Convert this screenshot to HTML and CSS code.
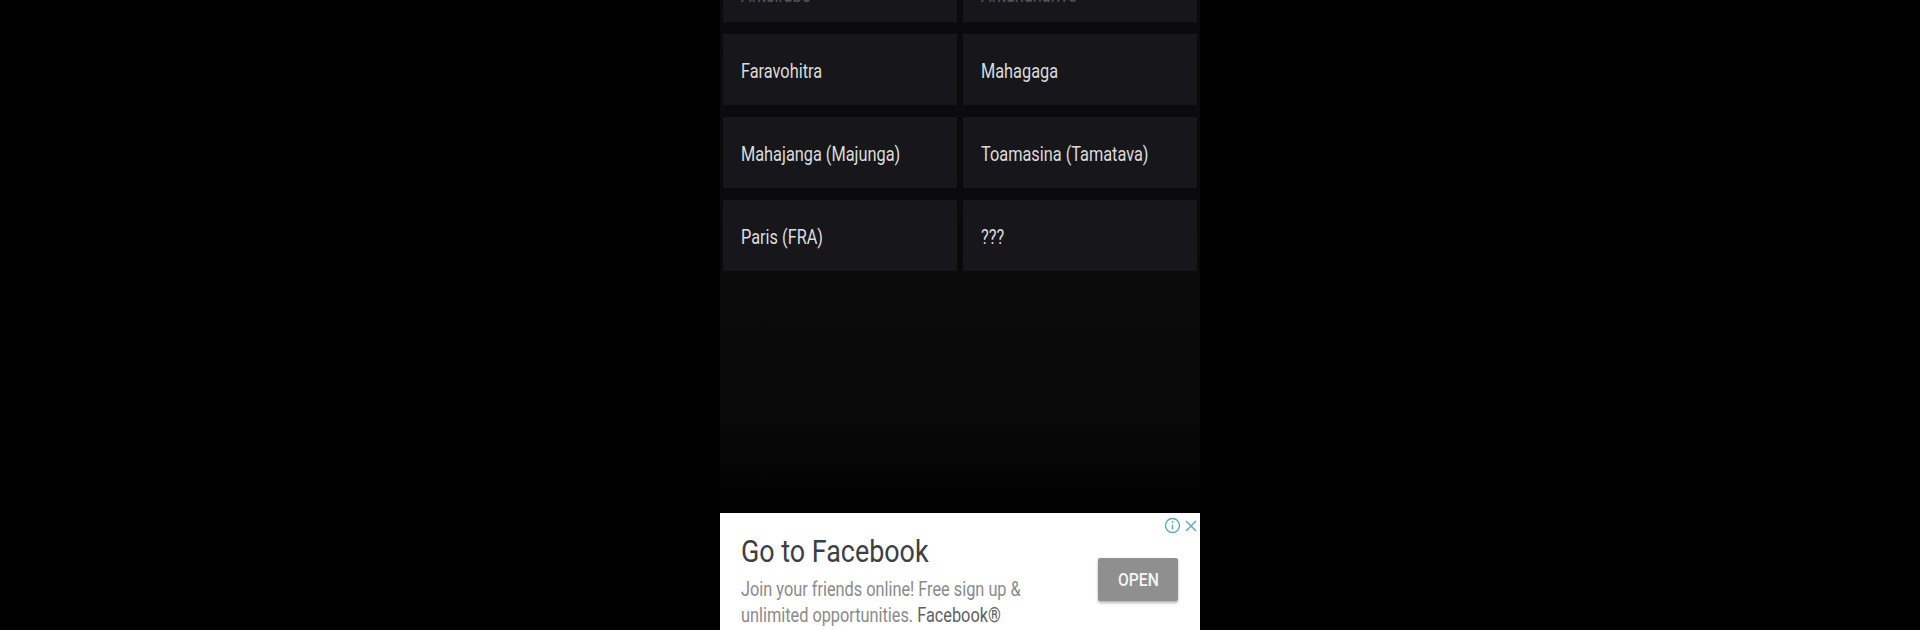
FILE: index.html
```html
<!DOCTYPE html>
<html lang="en">
<head>
    <meta charset="UTF-8">
    <title>Cities</title>
    <link rel="stylesheet" href="styles.css">
</head>
<body>
    <div class="phone">
        <div class="screen">
            <div class="city-grid">
                <div class="city-card city-card-top"><span>Antsirabe</span></div>
                <div class="city-card city-card-top"><span>Antananarivo</span></div>
                <div class="city-card"><span>Faravohitra</span></div>
                <div class="city-card"><span>Mahagaga</span></div>
                <div class="city-card"><span>Mahajanga (Majunga)</span></div>
                <div class="city-card"><span>Toamasina (Tamatava)</span></div>
                <div class="city-card"><span>Paris (FRA)</span></div>
                <div class="city-card"><span>???</span></div>
            </div>
        </div>

        <!-- Ad banner at the bottom -->
        <div class="ad">
            <div class="ad-close">
                <svg width="17" height="17" viewBox="0 0 17 17" fill="none" stroke="#5aa9b5" stroke-width="1.4">
                    <circle cx="8.5" cy="8.5" r="7"/>
                    <path d="M8.5 7.4v5.2M8.5 4.2v1.8"/>
                </svg>
                <svg width="12" height="12" viewBox="0 0 12 12" fill="none" stroke="#6aaab5" stroke-width="1.5">
                    <path d="M1 1l10 10M11 1L1 11"/>
                </svg>
            </div>
            <div class="ad-text">
                <h1>Go to Facebook</h1>
                <p>Join your friends online! Free sign up &amp; unlimited opportunities. <span>Facebook®</span></p>
            </div>
            <div class="ad-button"><span>OPEN</span></div>
        </div>
    </div>
</body>
</html>
```

FILE: styles.css
```css
* {
    padding: 0;
    margin: 0;
    box-sizing: border-box;
}

body {
    background-color: #000000;
    font-family: Roboto, sans-serif;
    height: 630px;
    overflow: hidden;
}

.phone {
    width: 480px;
    height: 630px;
    margin: 0 auto;
    display: flex;
    flex-direction: column;
    background-color: #000000;
}

.screen {
    flex: 0 0 513px;
    overflow: hidden;
    background: linear-gradient(#0b0b0d 0, #0a0a0b 400px, #020202 500px);
    padding: 0 3px;
}

.city-grid {
    display: grid;
    grid-template-columns: 234px 234px;
    grid-auto-rows: 71px;
    gap: 12px 6px;
    margin-top: -49px;
}

.city-card {
    display: flex;
    align-items: center;
    padding: 2px 0 0 18px;
    background-color: #16161b;
    color: #dcdcdc;
    font-size: 21px;
}

/* Screenshot is squeezed sideways, so the text is too */
.city-card span {
    display: inline-block;
    transform: scaleX(0.777);
    transform-origin: left center;
}

.city-card-top {
    padding-top: 16px;
    color: #55555a;
}

.ad {
    flex: 1;
    position: relative;
    display: flex;
    align-items: flex-start;
    overflow: hidden;
    background-color: #ffffff;
    padding: 18px 22px 0 21px;
}

.ad-close {
    position: absolute;
    top: 4px;
    right: 3px;
    display: flex;
    align-items: center;
    gap: 4px;
}

.ad-text {
    flex: 1;
}

.ad-text h1 {
    font-size: 32px;
    font-weight: 400;
    color: #3c4043;
    line-height: 40px;
    transform: scaleX(0.84);
    transform-origin: left center;
}

.ad-text p {
    width: 350px;
    margin-top: 5px;
    font-size: 20px;
    line-height: 26px;
    color: #8a8a8a;
    transform: scaleX(0.815);
    transform-origin: left center;
}

.ad-text p span {
    color: #5f5f5f;
}

.ad-button {
    flex: 0 0 80px;
    height: 43px;
    margin-top: 27px;
    display: flex;
    align-items: center;
    justify-content: center;
    background-color: #8f8f8f;
    color: #f5f5f5;
    font-size: 18px;
    font-weight: 500;
    border-radius: 2px;
    box-shadow: 0 2px 3px rgba(0, 0, 0, 0.3);
}

.ad-button span {
    display: inline-block;
    transform: scaleX(0.87);
}
```
